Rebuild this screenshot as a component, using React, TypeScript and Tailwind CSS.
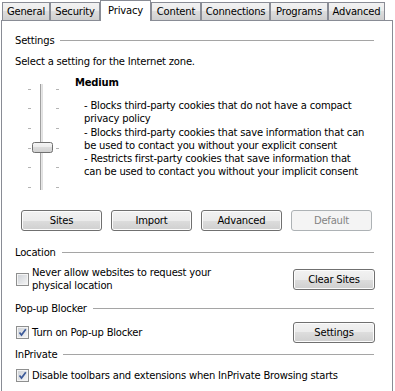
import React from "react";

const tabs = [
  { label: "General", w: "w-[48px]" },
  { label: "Security", w: "w-[50px]" },
  { label: "Privacy", w: "w-[51px]", active: true },
  { label: "Content", w: "w-[50px]" },
  { label: "Connections", w: "w-[69px]" },
  { label: "Programs", w: "w-[58px]" },
  { label: "Advanced", w: "w-[57px]" },
];

const btn =
  "h-[21px] rounded-[3px] border border-[#707070] bg-[linear-gradient(to_bottom,#f2f2f2_0%,#ebebeb_50%,#dddddd_50%,#cfcfcf_100%)] shadow-[inset_0_0_0_1px_#fcfcfc] flex items-center justify-center";

function GroupHeader({ title }: { title: string }) {
  return (
    <div className="flex h-[13px] items-center gap-[6px]">
      <span className="leading-[13px]">{title}</span>
      <div className="h-px flex-1 bg-[#a5a5a5]" />
    </div>
  );
}

function Checkbox({ checked }: { checked?: boolean }) {
  return (
    <div className="relative h-[13px] w-[13px] shrink-0 border border-[#8e8f8f] bg-[linear-gradient(135deg,#cbcfd5,#f7f7f7)] shadow-[inset_0_0_0_1px_#f4f4f4]">
      {checked && (
        <svg viewBox="0 0 11 11" className="absolute inset-0 h-[11px] w-[11px]">
          <path d="M2.5 5.5 L4.5 8 L8.8 2.2" fill="none" stroke="#3c5a99" strokeWidth="1.7" />
        </svg>
      )}
    </div>
  );
}

function Slider() {
  const ticks = [9, 28, 48, 68, 87, 107];
  return (
    <svg width="60" height="114" className="block">
      <rect x="25" y="4" width="3" height="106" fill="#e6e6e6" />
      <line x1="25.5" y1="4" x2="25.5" y2="110" stroke="#a0a0a0" />
      <line x1="27.5" y1="4" x2="27.5" y2="110" stroke="#e0e0e0" />
      {ticks.map((y) => (
        <g key={y}>
          <rect x="13" y={y} width="3" height="1" fill="#b4b4b4" />
          <rect x="41" y={y} width="3" height="1" fill="#b4b4b4" />
        </g>
      ))}
      <defs>
        <linearGradient id="thumb" x1="0" y1="0" x2="0" y2="1">
          <stop offset="0" stopColor="#f6f6f6" />
          <stop offset="0.5" stopColor="#ebebeb" />
          <stop offset="0.5" stopColor="#dcdcdc" />
          <stop offset="1" stopColor="#cfcfcf" />
        </linearGradient>
      </defs>
      <rect x="17.5" y="62.5" width="20" height="10" rx="2" fill="url(#thumb)" stroke="#707070" />
    </svg>
  );
}

export default function App() {
  return (
    <div className="h-[391px] w-[395px] overflow-hidden bg-white font-['DejaVu_Sans',sans-serif] text-[10px] tracking-[-0.2px] text-black">
      <div className="flex h-[20px] items-end pl-[2px]">
        {tabs.map((t) =>
          t.active ? (
            <div
              key={t.label}
              className={`${t.w} relative z-10 mb-[-1px] flex h-[21px] items-center justify-center border border-b-0 border-[#898c95] bg-white pb-[2px]`}
            >
              {t.label}
            </div>
          ) : (
            <div
              key={t.label}
              className={`${t.w} flex h-[18px] items-center justify-center border border-b-0 border-[#898c95] bg-[linear-gradient(to_bottom,#f2f2f2_0%,#ebebeb_50%,#dddddd_50%,#cfcfcf_100%)]`}
            >
              {t.label}
            </div>
          )
        )}
      </div>

      <div className="ml-[1px] h-[380px] w-[392px] border border-[#898c95] bg-white pl-[13px] pr-[18px]">
        <div className="mt-[13px]">
          <GroupHeader title="Settings" />
        </div>
        <div className="mt-[8px] h-[13px] leading-[13px]">Select a setting for the Internet zone.</div>

        <div className="flex h-[142px]">
          <div className="mt-[12px] w-[60px] shrink-0">
            <Slider />
          </div>
          <div className="flex flex-col">
            <div className="mt-[8px] h-[13px] font-bold leading-[13px]">Medium</div>
            <div className="ml-[9px] mt-[10px] whitespace-nowrap leading-[13.25px]">
              - Blocks third-party cookies that do not have a compact
              <br />
              privacy policy
              <br />
              - Blocks third-party cookies that save information that can
              <br />
              be used to contact you without your explicit consent
              <br />
              - Restricts first-party cookies that save information that
              <br />
              can be used to contact you without your implicit consent
            </div>
          </div>
        </div>

        <div className="ml-[6px] flex gap-[9px]">
          <div className={`${btn} w-[81px]`}>Sites</div>
          <div className={`${btn} w-[81px]`}>Import</div>
          <div className={`${btn} w-[81px]`}>Advanced</div>
          <div className="flex h-[21px] w-[81px] items-center justify-center rounded-[3px] border border-[#adb2b5] bg-[#f4f4f4] text-[#838383]">
            Default
          </div>
        </div>

        <div className="mt-[15px]">
          <GroupHeader title="Location" />
        </div>
        <div className="mt-[7px] flex h-[26px] items-center">
          <div className="ml-[1px]">
            <Checkbox />
          </div>
          <div className="ml-[3px] leading-[13px]">
            Never allow websites to request your
            <br />
            physical location
          </div>
          <div className={`${btn} ml-auto mr-[-1px] h-[20px] w-[82px]`}>Clear Sites</div>
        </div>

        <div className="mt-[10px]">
          <GroupHeader title="Pop-up Blocker" />
        </div>
        <div className="mt-[7px] flex h-[20px] items-center">
          <div className="ml-[1px]">
            <Checkbox checked />
          </div>
          <div className="ml-[3px] leading-[13px]">Turn on Pop-up Blocker</div>
          <div className={`${btn} ml-auto mr-[-1px] h-[19px] w-[82px]`}>Settings</div>
        </div>

        <div className="mt-[6px]">
          <GroupHeader title="InPrivate" />
        </div>
        <div className="mt-[8px] flex h-[13px] items-center">
          <div className="ml-[1px]">
            <Checkbox checked />
          </div>
          <div className="ml-[3px] whitespace-nowrap leading-[13px]">
            Disable toolbars and extensions when InPrivate Browsing starts
          </div>
        </div>
      </div>
    </div>
  );
}
